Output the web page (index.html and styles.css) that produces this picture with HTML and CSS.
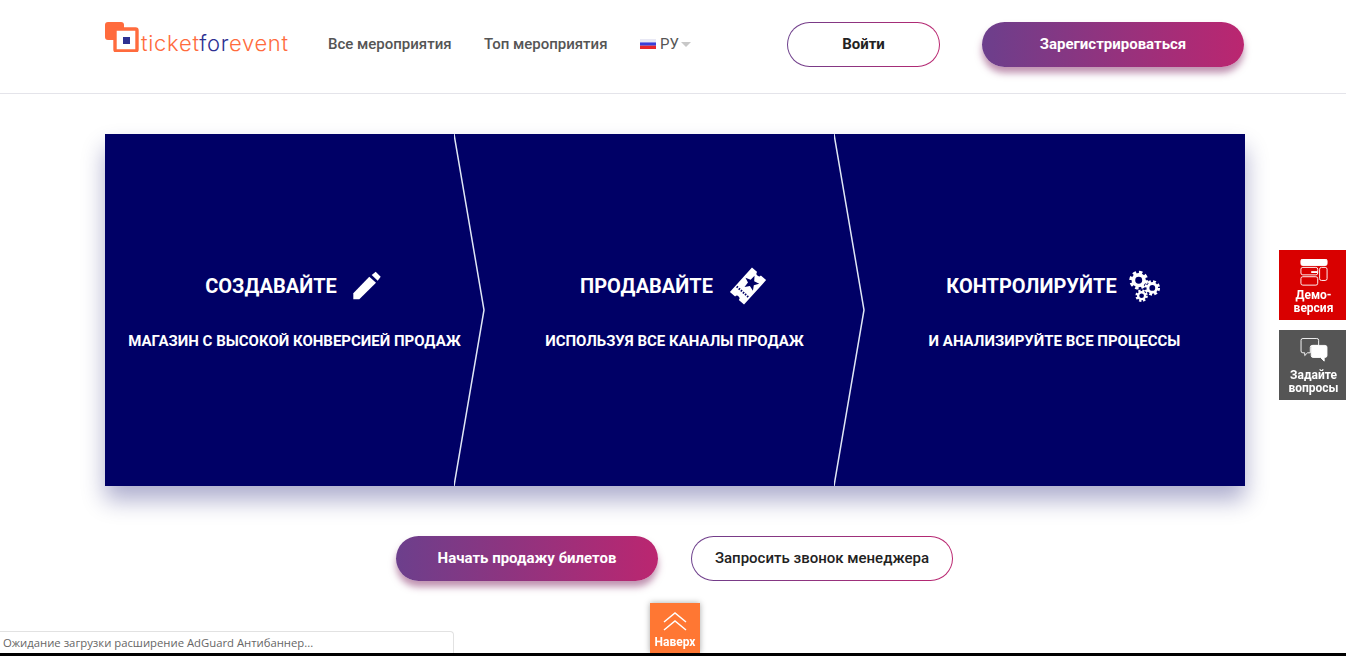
FILE: index.html
```html
<!DOCTYPE html>
<html lang="ru">
<head>
  <meta charset="UTF-8">
  <title>TicketForEvent</title>
  <link rel="stylesheet" href="styles.css">
</head>
<body>
  <header class="header">
    <a class="logo" href="#">
      <svg class="logo-mark" width="34" height="30" viewBox="0 0 34 30">
        <rect x="0" y="0" width="19" height="18" rx="3" fill="#ff6b3d"></rect>
        <rect x="10" y="7" width="22" height="22" rx="1.5" fill="#fff" stroke="#ff6b3d" stroke-width="3.4"></rect>
        <rect x="18" y="15" width="7" height="7" fill="#2e3192"></rect>
      </svg>
      <span class="logo-text">ticket<span class="logo-for">for</span>event</span>
    </a>
    <nav class="nav">
      <a class="nav-link" href="#">Все мероприятия</a>
      <a class="nav-link" href="#">Топ мероприятия</a>
      <div class="lang">
        <svg width="16" height="10" viewBox="0 0 16 10">
          <rect width="16" height="3.4" fill="#e8e8f4"></rect>
          <rect y="3.4" width="16" height="3.3" fill="#3a3fd8"></rect>
          <rect y="6.7" width="16" height="3.3" fill="#e8262a"></rect>
        </svg>
        <span>РУ</span>
        <span class="caret"></span>
      </div>
    </nav>
    <div class="header-actions">
      <a class="btn btn-outline btn-login" href="#"><span>Войти</span></a>
      <a class="btn btn-primary" href="#">Зарегистрироваться</a>
    </div>
  </header>

  <main class="content">
    <section class="banner">
      <div class="step">
        <h2 class="step-title">СОЗДАВАЙТЕ
          <svg width="32" height="32" viewBox="0 0 32 32" fill="#fff">
            <polygon points="1.3,23.3 17.3,6.7 24,12.7 7.3,29.3 1.3,29.3"></polygon>
            <polygon points="19.7,5 23.7,1.7 28.7,6.7 25.7,10.7"></polygon>
          </svg>
        </h2>
        <p class="step-text">МАГАЗИН С ВЫСОКОЙ КОНВЕРСИЕЙ ПРОДАЖ</p>
        <svg class="step-arrow" viewBox="0 0 31 352" preserveAspectRatio="none">
          <polyline points="0,0 30,176 0,352"></polyline>
        </svg>
      </div>
      <div class="step">
        <h2 class="step-title step-title-ticket">ПРОДАВАЙТЕ
          <svg width="38" height="38" viewBox="0 0 38 38">
            <g transform="rotate(-48 19 19)">
              <path d="M2.500 9.500h33v7a2.500 2.500 0 0 0 0 5v7h-33v-7a2.500 2.500 0 0 0 0-5z" fill="#fff"></path>
              <polygon points="23.500,11.500 25.500,16.700 31,17 26.700,20.400 28.200,25.800 23.500,22.800 18.800,25.800 20.300,20.400 16,17 21.500,16.700" fill="#000066"></polygon>
              <line x1="11" y1="11" x2="11" y2="27" stroke="#000066" stroke-width="2" stroke-dasharray="1.500 1.300"></line>
            </g>
          </svg>
        </h2>
        <p class="step-text">ИСПОЛЬЗУЯ ВСЕ КАНАЛЫ ПРОДАЖ</p>
        <svg class="step-arrow" viewBox="0 0 31 352" preserveAspectRatio="none">
          <polyline points="0,0 30,176 0,352"></polyline>
        </svg>
      </div>
      <div class="step">
        <h2 class="step-title step-title-gears">КОНТРОЛИРУЙТЕ
          <svg width="33" height="34" viewBox="0 0 34 34" fill="none" stroke="#fff">
            <circle cx="10" cy="11" r="8" stroke-width="3.400" stroke-dasharray="3.500 2.780"></circle>
            <circle cx="10" cy="11" r="5.500" stroke-width="3.800"></circle>
            <circle cx="24" cy="19" r="6.600" stroke-width="2.800" stroke-dasharray="2.900 2.280"></circle>
            <circle cx="24" cy="19" r="4.500" stroke-width="3"></circle>
            <circle cx="13" cy="27" r="5.200" stroke-width="2.400" stroke-dasharray="2.300 1.800"></circle>
            <circle cx="13" cy="27" r="3.600" stroke-width="2.400"></circle>
          </svg>
        </h2>
        <p class="step-text">И АНАЛИЗИРУЙТЕ ВСЕ ПРОЦЕССЫ</p>
      </div>
    </section>

    <div class="cta">
      <a class="btn btn-primary" href="#">Начать продажу билетов</a>
      <a class="btn btn-outline" href="#"><span>Запросить звонок менеджера</span></a>
    </div>
  </main>

  <aside class="side-tabs">
    <a class="side-tab side-tab-demo" href="#">
      <svg width="28" height="28" viewBox="0 0 30 30" fill="none" stroke="#fff" stroke-width="1">
        <rect x="1" y="0" width="28" height="7" rx="2" fill="#fff"></rect>
        <rect x="1" y="9" width="18" height="8" rx="2"></rect>
        <rect x="1" y="19" width="18" height="9" rx="2"></rect>
        <rect x="21" y="9" width="8" height="14" rx="2"></rect>
        <rect x="12" y="13" width="7" height="2" fill="#fff" stroke="none"></rect>
      </svg>
      <span>Демо-<br>версия</span>
    </a>
    <a class="side-tab side-tab-ask" href="#">
      <svg width="28" height="25" viewBox="0 0 30 27" fill="none" stroke="#fff" stroke-width="1">
        <path d="M3 .5h15a2 2 0 0 1 2 2V8h-7a2 2 0 0 0-2 2v6H8l-3 3v-3H3a2 2 0 0 1-2-2V2.500a2 2 0 0 1 2-2z"></path>
        <path d="M12 10a2 2 0 0 1 2-2h13a2 2 0 0 1 2 2v9a2 2 0 0 1-2 2h-1v4l-4-4h-8a2 2 0 0 1-2-2z" fill="#fff"></path>
      </svg>
      <span>Задайте<br>вопросы</span>
    </a>
  </aside>

  <a class="to-top" href="#">
    <svg width="26" height="20" viewBox="0 0 26 20" fill="none" stroke="#fff" stroke-width="1.500">
      <polyline points="2,10 13,1 24,10"></polyline>
      <polyline points="2,18 13,9 24,18"></polyline>
    </svg>
    <span>Наверх</span>
  </a>

  <div class="status-bar">Ожидание загрузки расширение AdGuard Антибаннер...</div>
  <div class="window-edge"></div>
</body>
</html>
```

FILE: styles.css
```css
* {
  margin: 0;
  padding: 0;
  box-sizing: border-box;
}

html, body {
  height: 100%;
  overflow: hidden;
}

body {
  background: #ffffff;
  color: #222222;
  font-family: Roboto, "Liberation Sans", Arial, sans-serif;
  font-size: 15px;
}

a {
  text-decoration: none;
  color: inherit;
}

.header {
  height: 94px;
  padding: 22px 102px 0 105px;
  border-bottom: 1px solid #e4e4ea;
  display: flex;
  align-items: flex-start;
}

.logo {
  display: flex;
  align-items: flex-end;
  width: 223px;
  height: 32px;
}

.logo-mark {
  flex: none;
  align-self: flex-start;
}

.logo-text {
  margin-left: 2px;
  font-family: Inter, sans-serif;
  font-size: 22px;
  font-weight: 300;
  line-height: 22px;
  letter-spacing: 0.7px;
  color: #ff6b3d;
}

.logo-for {
  color: #2e3192;
}

.nav {
  display: flex;
  align-items: center;
  gap: 32.500px;
  height: 43px;
}

.nav-link {
  font-weight: 500;
  color: #555555;
}

.lang {
  display: flex;
  align-items: center;
  gap: 4px;
  color: #555555;
}

.caret {
  width: 0;
  height: 0;
  margin-top: 2px;
  margin-left: -2px;
  border-left: 5px solid transparent;
  border-right: 5px solid transparent;
  border-top: 5px solid #c8c8c8;
}

.header-actions {
  margin-left: auto;
  display: flex;
  gap: 42px;
}

.btn {
  display: flex;
  align-items: center;
  justify-content: center;
  width: 262px;
  height: 45px;
  padding-bottom: 2px;
  border-radius: 23px;
  font-weight: 700;
}

.btn-primary {
  color: #ffffff;
  background: linear-gradient(90deg, #6c3f8c, #bb2670);
  box-shadow: 0 6px 7px rgba(130, 40, 100, 0.5);
}

.btn-outline {
  font-weight: 500;
  color: #222222;
  border: 1px solid transparent;
  background: linear-gradient(#fff, #fff) padding-box, linear-gradient(90deg, #6c3f8c, #bb2670) border-box;
}

.btn-login {
  width: 153px;
  font-weight: 700;
}

.content {
  width: 1140px;
  margin-left: 105px;
  padding-top: 40px;
}

.banner {
  display: grid;
  grid-template-columns: repeat(3, 1fr);
  height: 352px;
  background: #000066;
  color: #ffffff;
  box-shadow: 0 14px 22px rgba(0, 0, 102, 0.32);
}

.step {
  position: relative;
  padding-top: 133px;
  text-align: center;
}

.step-title {
  display: flex;
  align-items: center;
  justify-content: center;
  gap: 15px;
  height: 38px;
  padding-right: 1px;
  font-size: 20px;
  font-weight: 700;
}

.step-title-ticket {
  gap: 16px;
  padding-right: 3px;
}

.step-title-gears {
  gap: 12px;
  padding-right: 2px;
}

.step-text {
  margin-top: 26px;
  padding-right: 1px;
  font-size: 15px;
  font-weight: 700;
  line-height: 20px;
}

.step-arrow {
  position: absolute;
  top: 0;
  right: 0;
  width: 31px;
  height: 100%;
  fill: none;
  stroke: #dfe6f5;
  stroke-width: 1.500;
}

.cta {
  display: flex;
  justify-content: center;
  gap: 33px;
  margin-top: 50px;
  margin-left: -1px;
}

.side-tabs {
  position: fixed;
  top: 250px;
  right: 0;
  display: flex;
  flex-direction: column;
  gap: 10px;
}

.side-tab {
  display: flex;
  flex-direction: column;
  align-items: center;
  width: 67px;
  height: 70px;
  padding: 9px 0 0 2px;
  color: #ffffff;
  font-size: 12px;
  font-weight: 700;
  line-height: 12.500px;
  text-align: center;
}

.side-tab svg {
  flex: none;
  margin-bottom: 2px;
}

.side-tab-demo {
  background: #d90000;
}

.side-tab-ask {
  padding-top: 8px;
  background: #555555;
}

.side-tab-ask svg {
  margin-bottom: 6px;
}

.to-top {
  position: fixed;
  left: 650px;
  bottom: 3px;
  display: flex;
  flex-direction: column;
  align-items: center;
  width: 50px;
  height: 50px;
  padding-top: 9px;
  background: #ff7733;
  color: #ffffff;
  font-size: 12px;
  font-weight: 700;
  box-shadow: 0 0 6px rgba(0, 0, 0, 0.35);
}

.to-top span {
  margin-top: 3px;
}

.status-bar {
  position: fixed;
  left: 0;
  bottom: 3px;
  width: 454px;
  height: 22px;
  padding-left: 3px;
  background: #ffffff;
  border: 1px solid #e2e2e2;
  border-left: none;
  border-bottom: none;
  border-top-right-radius: 4px;
  font-family: "Open Sans", sans-serif;
  font-size: 11.300px;
  line-height: 21px;
  color: #666666;
}

.window-edge {
  position: fixed;
  left: 0;
  right: 0;
  bottom: 0;
  height: 3px;
  background: #000000;
}
```
